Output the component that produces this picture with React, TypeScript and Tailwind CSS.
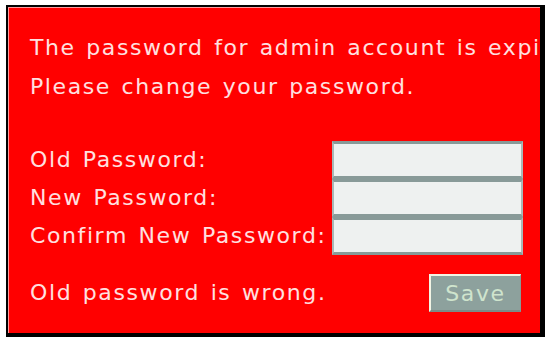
import React from 'react';

const font = { fontFamily: '"DejaVu Sans", Verdana, sans-serif' };

const fields = ['Old Password:', 'New Password:', 'Confirm New Password:'];

const App: React.FC = () => {
  return (
    <div className="w-[549px] h-[339px] bg-white pt-[5px] pl-[6px]">
      {/* Frame */}
      <div className="w-[539px] h-[332px] border-l-2 border-t-2 border-r-[5px] border-b-[4px] border-black">
        <div
          className="h-full overflow-hidden bg-[#ff0000] border-l border-t border-[#ff9a9a] pl-[21px] pr-[17px] pt-[20px] text-[22px] tracking-[1.6px] [word-spacing:2px] text-[#ffe0e0]"
          style={font}
        >
          {/* Message */}
          <div className="leading-[39px] whitespace-nowrap">
            <p>The password for admin account is expired.</p>
            <p>Please change your password.</p>
          </div>

          {/* Fields */}
          <div className="mt-[35px] flex flex-col">
            {fields.map((label) => (
              <div key={label} className="flex h-[38px] items-center justify-between">
                <span className="leading-[38px] whitespace-nowrap">{label}</span>
                <input
                  type="password"
                  className="shrink-0 w-[191px] h-[38px] bg-[#eef1f0] border-x-2 border-y-[3px] border-x-[#a9b8b6] border-y-[#889a98] outline-none"
                />
              </div>
            ))}
          </div>

          {/* Status + Save */}
          <div className="mt-[19px] flex items-center justify-between">
            <span className="leading-[38px] whitespace-nowrap">Old password is wrong.</span>
            <button
              className="mr-[2px] w-[92px] h-[38px] bg-[#8da19d] border-l-2 border-t-2 border-b-2 border-r border-l-[#f2f4e4] border-t-[#f2f4e4] border-b-[#7a8c88] border-r-[#889a96] text-[#cfe4cd] text-[22px] tracking-[1.6px]"
              style={font}
            >
              Save
            </button>
          </div>
        </div>
      </div>
    </div>
  );
};

export default App;
